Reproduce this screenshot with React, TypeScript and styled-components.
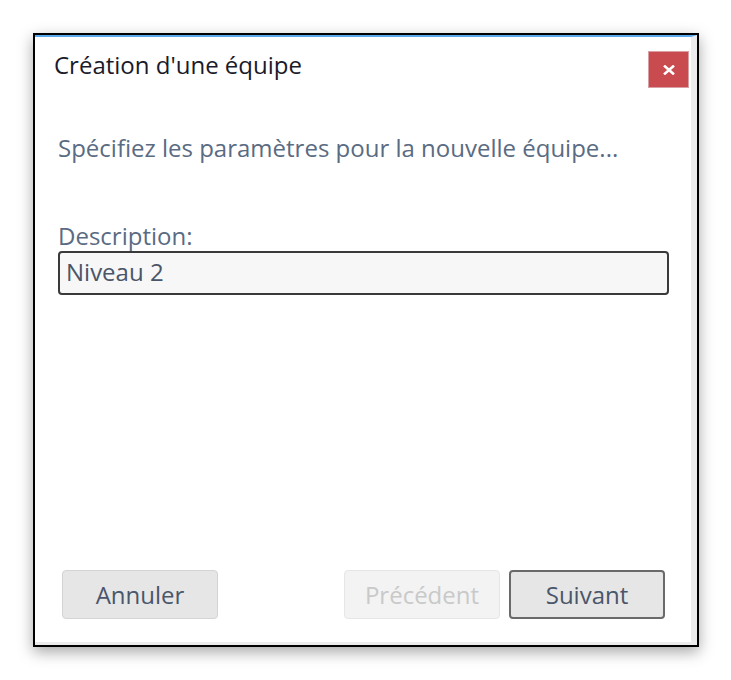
import React from 'react'
import styled, { createGlobalStyle } from 'styled-components'

const GlobalStyle = createGlobalStyle`
    html, body {
        margin: 0;
        padding: 0;
        background: #ffffff;
    }
    body {
        font-family: 'Open Sans', 'Noto Sans', sans-serif;
    }
`

export default function App() {
    return (
        <>
            <GlobalStyle />
            <Page>
                <Frame>
                    <Window>
                        <Header>
                            <Title>Création d'une équipe</Title>
                            <CloseButton aria-label="Fermer">
                                <svg width="12" height="10" viewBox="0 0 12 10">
                                    <path d="M2 1.5 L10 8.5 M10 1.5 L2 8.5" stroke="#ffffff" strokeWidth="2.6" strokeLinecap="square" />
                                </svg>
                            </CloseButton>
                        </Header>
                        <Body>
                            <Intro>Spécifiez les paramètres pour la nouvelle équipe...</Intro>
                            <Field>
                                <Label>Description:</Label>
                                <TextBox defaultValue="Niveau 2" />
                            </Field>
                        </Body>
                        <Footer>
                            <Button>Annuler</Button>
                            <NavGroup>
                                <Button disabled>Précédent</Button>
                                <Button primary>Suivant</Button>
                            </NavGroup>
                        </Footer>
                    </Window>
                </Frame>
            </Page>
        </>
    )
}

const Page = styled.div`
    width: 731px;
    height: 680px;
    padding: 33px 0 0 33px;
    box-sizing: border-box;
`

const Frame = styled.div`
    width: 666px;
    height: 614px;
    box-sizing: border-box;
    border: 2px solid #000000;
    box-shadow: 0 5px 14px rgba(0, 0, 0, 0.35);
    background: #ececec;
`

const Window = styled.div`
    display: flex;
    flex-direction: column;
    height: 100%;
    box-sizing: border-box;
    background: #ffffff;
    border-top: 2px solid #5aa9ec;
    border-right: 6px solid #ececec;
    border-bottom: 3px solid #ececec;
`

const Header = styled.div`
    display: flex;
    justify-content: space-between;
    align-items: flex-start;
    padding: 12px 2px 0 19px;
`

const Title = styled.h1`
    margin: 0;
    font-size: 24px;
    line-height: 32px;
    font-weight: 400;
    color: #1a1a2a;
`

const CloseButton = styled.button`
    display: flex;
    align-items: center;
    justify-content: center;
    width: 41px;
    height: 37px;
    margin-top: 2px;
    padding: 0;
    border: 1px solid #d9a0a3;
    background: #c94b50;
    cursor: pointer;
`

const Body = styled.div`
    flex: 1;
    display: flex;
    flex-direction: column;
    padding: 0 22px 0 23px;
`

const Intro = styled.p`
    margin: 44px 0 0;
    font-size: 24px;
    line-height: 32px;
    color: #5a6b82;
`

const Field = styled.div`
    display: flex;
    flex-direction: column;
    margin-top: 56px;
`

const Label = styled.label`
    font-size: 24px;
    line-height: 31px;
    color: #5a6b82;
`

const TextBox = styled.input`
    height: 44px;
    box-sizing: border-box;
    padding: 0 6px 3px;
    border: 2px solid #3a3a3a;
    border-radius: 4px;
    background: #f7f7f7;
    font-family: 'Open Sans', 'Noto Sans', sans-serif;
    font-size: 24px;
    color: #4a5568;
    outline: none;
`

const Footer = styled.div`
    display: flex;
    justify-content: space-between;
    padding: 0 26px 23px 27px;
`

const NavGroup = styled.div`
    display: flex;
    gap: 9px;
`

const Button = styled.button<{ primary?: boolean }>`
    width: 156px;
    height: 49px;
    box-sizing: border-box;
    border-radius: 4px;
    border: ${({ primary }) => (primary ? '2px solid #6a6a6a' : '1px solid #d4d4d4')};
    background: #e6e6e6;
    font-family: 'Open Sans', 'Noto Sans', sans-serif;
    font-size: 24px;
    color: #4a566a;
    cursor: pointer;

    &:disabled {
        background: #f3f3f3;
        border-color: #e6e6e6;
        color: #c9c9c9;
        cursor: default;
    }
`
